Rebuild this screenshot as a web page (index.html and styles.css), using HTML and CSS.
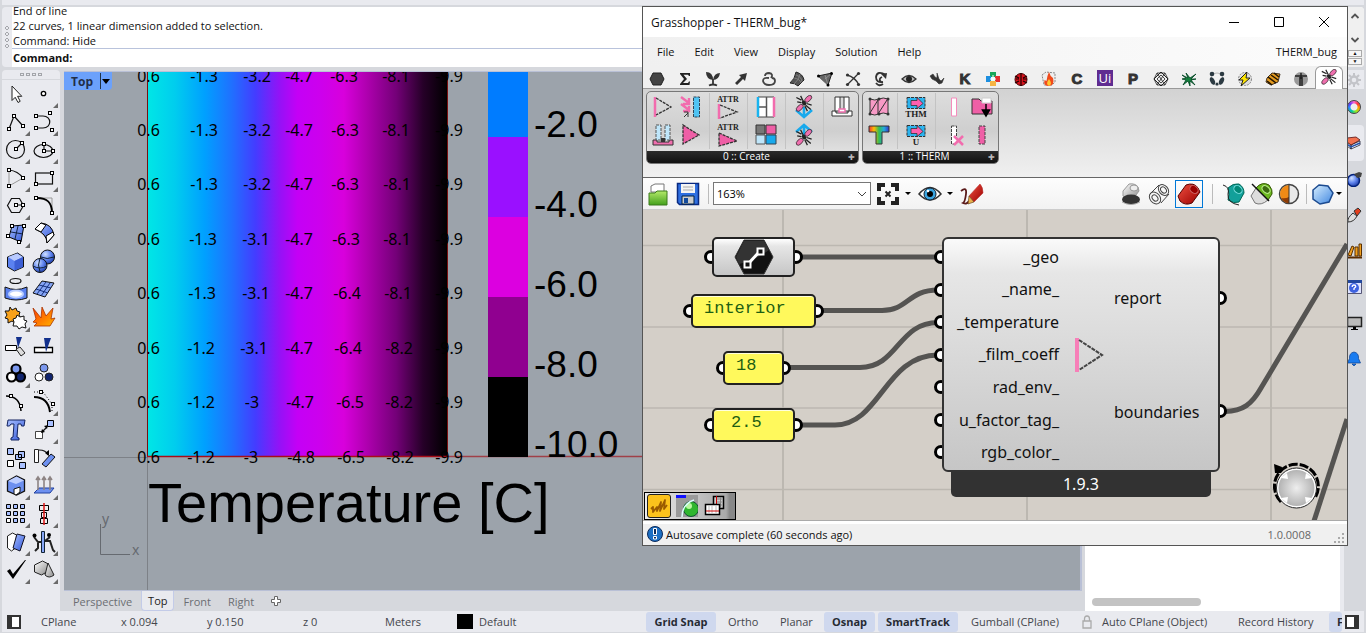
FILE: index.html
```html
<!DOCTYPE html>
<html lang="en">
<head>
<meta charset="utf-8">
<title>Grasshopper - THERM_bug</title>
<link rel="stylesheet" href="styles.css">
</head>
<body>
<svg class="defs" aria-hidden="true">
  <defs>
    <linearGradient id="gBlue" x1="0" y1="0" x2="1" y2="1"><stop offset="0" stop-color="#a9c0ff"/><stop offset="1" stop-color="#2f55d8"/></linearGradient>
    <radialGradient id="gBall" cx=".35" cy=".3" r=".8"><stop offset="0" stop-color="#cfe0ff"/><stop offset=".5" stop-color="#5f84ee"/><stop offset="1" stop-color="#132f96"/></radialGradient>
    <linearGradient id="gGray" x1="0" y1="0" x2="1" y2="1"><stop offset="0" stop-color="#fff"/><stop offset="1" stop-color="#888"/></linearGradient>
    <linearGradient id="gHot" x1="0" y1="0" x2="1" y2="1"><stop offset="0" stop-color="#ff3a00"/><stop offset="1" stop-color="#ffb400"/></linearGradient>
    <linearGradient id="gRed" x1="0" y1="0" x2="1" y2="1"><stop offset="0" stop-color="#f05040"/><stop offset="1" stop-color="#900"/></linearGradient>
    <linearGradient id="gGreen" x1="0" y1="0" x2="0" y2="1"><stop offset="0" stop-color="#b4ea6a"/><stop offset="1" stop-color="#43a01c"/></linearGradient>
    <linearGradient id="gRain"><stop offset="0" stop-color="#e33"/><stop offset=".25" stop-color="#fb0"/><stop offset=".5" stop-color="#3b5"/><stop offset=".75" stop-color="#2ad"/><stop offset="1" stop-color="#33c"/></linearGradient>
    <linearGradient id="gHex" x1="0" y1="0" x2="1" y2="1"><stop offset="0" stop-color="#d8efff"/><stop offset="1" stop-color="#3f86e0"/></linearGradient>
    <radialGradient id="gDial"><stop offset="0" stop-color="#eee"/><stop offset="1" stop-color="#b0b0b0"/></radialGradient>
    <symbol id="pt" viewBox="0 0 4 4"><rect x=".5" y=".5" width="3" height="3" fill="#fff" stroke="#000"/></symbol>
    <symbol id="fly" viewBox="0 0 20 20"><path d="M1 3l6 3M2 8l5 1M6 1l3 6M12 12l6 5M11 13l3 6M13 10l6 2" fill="none" stroke="#222" stroke-width="1.500"/><g fill="#ef6fae" stroke="#222" stroke-width=".8"><ellipse cx="15" cy="4.500" rx="2.800" ry="5" transform="rotate(45 15 4.500)"/><ellipse cx="5" cy="15" rx="2.800" ry="5" transform="rotate(45 5 15)"/></g><ellipse cx="10" cy="9.500" rx="2.200" ry="3.200" fill="#222" transform="rotate(-40 10 9.500)"/></symbol>
  </defs>
</svg>

<div class="app">
  <div class="top-strip"></div>
  <section class="command" aria-label="Command history">
    <div class="grip grip-v"></div>
    <div class="command-body">
      <div class="history"><p>End of line</p><p>22 curves, 1 linear dimension added to selection.</p><p>Command: Hide</p></div>
      <label class="prompt">Command:<input type="text" class="prompt-input"></label>
    </div>
    <div class="command-scroll">
      <div class="scroll-arrows"><svg viewBox="0 0 10 6"><path d="M1.500 5L5 1.500 8.500 5"/></svg><svg viewBox="0 0 10 6"><path d="M1.500 1L5 4.500 8.500 1"/></svg></div>
      <div class="spin"><button type="button" aria-label="Up">▲</button><button type="button" aria-label="Down">▼</button></div>
    </div>
  </section>

  <div class="work">
    <aside class="tools" aria-label="Tools">
      <div class="grip grip-h"></div>
      <div class="tool-grid">
        <button class="tool" aria-label="Select"><svg viewBox="0 0 28 28"><path d="M10 6v14.500l3.200-3.200 2.800 5.200 2.200-1.200-2.600-5h4.200z" fill="#fff" stroke="#222"/></svg></button>
        <button class="tool more" aria-label="Point"><svg viewBox="0 0 28 28"><circle cx="13.500" cy="13.500" r="2.200" fill="#fff" stroke="#000" stroke-width="1.300"/></svg></button>

        <button class="tool more" aria-label="Polyline"><svg viewBox="0 0 28 28"><path d="M7 21L12 8l9 10" class="ln"/><use href="#pt" x="5" y="19" width="4" height="4"/><use href="#pt" x="10" y="6" width="4" height="4"/><use href="#pt" x="19" y="16" width="4" height="4"/></svg></button>
        <button class="tool more" aria-label="Curve"><svg viewBox="0 0 28 28"><path d="M6 8h7c9 0 9 12 0 12H6" class="ln"/><use href="#pt" x="4" y="6" width="4" height="4"/><use href="#pt" x="4" y="18" width="4" height="4"/><use href="#pt" x="18" y="3" width="4" height="4"/><use href="#pt" x="20" y="20" width="4" height="4"/></svg></button>

        <button class="tool more" aria-label="Circle"><svg viewBox="0 0 28 28"><circle cx="13.500" cy="13.500" r="9" class="ln"/><path d="M14 13l6-6" class="ln"/><use href="#pt" x="12" y="11" width="4" height="4"/><use href="#pt" x="18" y="5" width="4" height="4"/></svg></button>
        <button class="tool more" aria-label="Ellipse"><svg viewBox="0 0 28 28"><ellipse cx="13.500" cy="15" rx="9.500" ry="6.500" class="ln"/><path d="M14 8v7h9" class="ln"/><use href="#pt" x="12" y="13" width="4" height="4"/><use href="#pt" x="12" y="6" width="4" height="4"/><use href="#pt" x="21" y="13" width="4" height="4"/></svg></button>

        <button class="tool more" aria-label="Arc"><svg viewBox="0 0 28 28"><path d="M7 6v16l14-8" fill="none" stroke="#999"/><path d="M7 6q9 1 14 8" class="ln"/><use href="#pt" x="5" y="4" width="4" height="4"/><use href="#pt" x="19" y="12" width="4" height="4"/><use href="#pt" x="5" y="20" width="4" height="4"/></svg></button>
        <button class="tool more" aria-label="Rectangle"><svg viewBox="0 0 28 28"><rect x="5.500" y="9" width="17" height="11" class="ln"/><use href="#pt" x="20" y="7" width="4" height="4"/><use href="#pt" x="4" y="18" width="4" height="4"/></svg></button>

        <button class="tool more" aria-label="Polygon"><svg viewBox="0 0 28 28"><path d="M5.500 13.500l4-7h8l4 7-4 7h-8zM14 13h8" class="ln"/><use href="#pt" x="12" y="11" width="4" height="4"/><use href="#pt" x="19" y="11" width="4" height="4"/></svg></button>
        <button class="tool more" aria-label="Fillet"><svg viewBox="0 0 28 28"><path d="M8 6h14v14" fill="none" stroke="#999"/><path d="M7 6c10 0 15 4 15 15" fill="none" stroke="#000" stroke-width="2"/><use href="#pt" x="4" y="4" width="4" height="4"/><use href="#pt" x="20" y="19" width="4" height="4"/></svg></button>

        <button class="tool more" aria-label="Surface from points"><svg viewBox="0 0 28 28"><path d="M10 6l12-1-3 17-12-5z" fill="url(#gBlue)" stroke="#000"/><path d="M16 6l-3 13M9 12l12 2" stroke="#124" fill="none"/><use href="#pt" x="8" y="4" width="4" height="4"/><use href="#pt" x="20" y="4" width="4" height="4"/><use href="#pt" x="4" y="14" width="4" height="4"/><use href="#pt" x="15" y="20" width="4" height="4"/></svg></button>
        <button class="tool more" aria-label="Loft"><svg viewBox="0 0 28 28"><path d="M11 3q11 1 13 12l-7 8q0-9-12-14z" fill="url(#gBlue)" stroke="#000"/><path d="M5 9l6-6 5 2-5 7zM16 16l7-4 1 3-7 8z" fill="#fff" stroke="#000"/></svg></button>

        <button class="tool more" aria-label="Box"><svg viewBox="0 0 28 28"><path d="M5.500 9l10-4 6 4v10l-9 4-7-4z" fill="#5b81f0" stroke="#111"/><path d="M6 9l9-3.500 6 3.500-8.500 4z" fill="#b8caff"/><path d="M12.500 13l8.500-4v10l-8.500 3.500z" fill="#3c5ed4"/></svg></button>
        <button class="tool more" aria-label="Boolean union"><svg viewBox="0 0 28 28"><circle cx="17.500" cy="9" r="7" fill="url(#gBall)" stroke="#111"/><circle cx="10" cy="17.500" r="7" fill="url(#gBall)" stroke="#111"/><path d="M3 18q7 4 14 0M10 10q-3 7 0 14M11 9q6 3 13 0" fill="none" stroke="#123"/></svg></button>

        <button class="tool more" aria-label="Extract"><svg viewBox="0 0 28 28"><ellipse cx="13.500" cy="5" rx="5.500" ry="2.500" class="ln"/><path d="M3 11q11 5 22 0v11q-11 4-22 0z" fill="#5b81f0" stroke="#111"/><ellipse cx="14" cy="18" rx="7" ry="3.500" fill="#fff" stroke="#bcd0ff" stroke-width="2"/></svg></button>
        <button class="tool more" aria-label="Mesh"><svg viewBox="0 0 28 28"><path d="M12 5l12 2-9 14-12-4z" fill="#86a5f5" stroke="#111"/><path d="M9 9l12 3M6 13l12 4M16 6L7 18M20 7l-9 13" stroke="#16307c" fill="none"/></svg></button>

        <button class="tool more" aria-label="Join"><svg viewBox="0 0 28 28"><path d="M8 3l2 3 4-2 1 3 3 1-1 3 2 3-4 2-2 3-3-2-4 2 0-4-3-1 2-3-2-4 4 0z" fill="#f9a21b" stroke="#111"/><path d="M15 11l3 2 4-1 0 4 3 1-2 3 1 4-4-1-3 2-2-3-4 0 1-4-1-3 3-1z" fill="#fff" stroke="#111"/></svg></button>
        <button class="tool" aria-label="Explode"><svg viewBox="0 0 28 28"><path d="M3 4l8 10 1-11 4 9 7-8-2 11 4-1-5 8H4l3-3-4-1 3-3z" fill="url(#gHot)" stroke="#a30" stroke-width=".8"/></svg></button>

        <button class="tool" aria-label="Trim"><svg viewBox="0 0 28 28"><path d="M3.500 13.500h11v5h-11z" fill="#fff" stroke="#000"/><path d="M14 17l4-2 5 6-4 3z" fill="#ddd" stroke="#222"/><path d="M14 5h6l-4 11z" fill="#12308c"/></svg></button>
        <button class="tool" aria-label="Split"><svg viewBox="0 0 28 28"><path d="M4.500 15.500h18v5h-18z" fill="#fff" stroke="#000" stroke-width="1.300"/><path d="M14 6h7l-5 14z" fill="#12308c"/></svg></button>

        <button class="tool more" aria-label="Group"><svg viewBox="0 0 28 28"><g stroke="#000" stroke-width="2.200"><circle cx="14" cy="9" r="4.500" fill="#7b98ee"/><circle cx="9.500" cy="17" r="4.500" fill="#fff"/><circle cx="18.500" cy="17" r="4.500" fill="#10246e"/></g></svg></button>
        <button class="tool" aria-label="Ungroup"><svg viewBox="0 0 28 28"><g stroke="#222"><circle cx="14" cy="8" r="4" fill="#7b98ee"/><circle cx="9" cy="17" r="4" fill="#fff"/><circle cx="19" cy="17" r="4" fill="#10246e"/></g></svg></button>

        <button class="tool" aria-label="Edit points"><svg viewBox="0 0 28 28"><path d="M4 8q14 0 15 15" fill="none" stroke="#000" stroke-width="1.500"/><use href="#pt" x="7" y="6" width="4" height="4"/><use href="#pt" x="17" y="16" width="4" height="4"/></svg></button>
        <button class="tool more" aria-label="Control points"><svg viewBox="0 0 28 28"><path d="M4 9q14 0 16 15" fill="none" stroke="#000" stroke-width="2"/><path d="M4 4h9l9 12v8" fill="none" stroke="#000" stroke-dasharray="1 2"/><use href="#pt" x="9" y="2" width="4" height="4"/><use href="#pt" x="21" y="14" width="4" height="4"/></svg></button>

        <button class="tool" aria-label="Text"><svg viewBox="0 0 28 28"><path d="M6 4h17l-1 6h-2.500l-.5-2h-3l-1 13 2 1v2h-8v-2l2-1 1-13H9l-1.500 2H5z" fill="url(#gBlue)" stroke="#12225e"/></svg></button>
        <button class="tool more" aria-label="Move"><svg viewBox="0 0 28 28"><path d="M17.500 4.500h6v6h-6z" fill="#a9c0ff" stroke="#000"/><path d="M5.500 15.500h7v7h-7z" fill="#fff" stroke="#444"/><path d="M12 16l4-4" class="ln"/><path d="M12 13l3 3-4 1zM14 10l3 3 1-4z" fill="#000"/></svg></button>

        <button class="tool" aria-label="Copy"><svg viewBox="0 0 28 28"><g stroke="#000"><path d="M5.500 4.500h6v6h-6zM16.500 7.500h6v6h-6zM13.500 10.500h6v5h-6zM17.500 18.500h6v6h-6z" fill="#a9c0ff"/><path d="M5.500 16.500h6v6h-6z" fill="#fff"/></g></svg></button>
        <button class="tool" aria-label="Rotate"><svg viewBox="0 0 28 28"><path d="M4.500 5.500h4v13h-4z" fill="#fff" stroke="#222"/><path d="M12 20l9-10 4 3-9 10z" fill="#6d90f0" stroke="#111"/><path d="M9 6q7 0 9 5" class="ln"/><path d="M15 9l4 3 0-6z"/></svg></button>

        <button class="tool more" aria-label="Cap"><svg viewBox="0 0 28 28"><path d="M5.500 9l9-5 8 4v11l-8 4-9-4z" fill="#6d90f0" stroke="#111" stroke-width="1.300"/><path d="M6 9l8.500-4.500 7.500 4-8 3.500z" fill="#bccdff"/><path d="M12 17l6-2v5l-4 3-2-1z" fill="#fff" stroke="#111"/></svg></button>
        <button class="tool more" aria-label="Extrude"><svg viewBox="0 0 28 28"><path d="M4 21l5-5h15l-4 5z" fill="#6d90f0" stroke="#2040a0"/><g stroke="#8d8484" stroke-width="1.600" fill="none"><path d="M8 18V6M14 18V6M20 18V6M6 8l2-3 2 3M12 8l2-3 2 3M18 8l2-3 2 3"/></g></svg></button>

        <button class="tool more" aria-label="Array"><svg viewBox="0 0 28 28"><g stroke="#000" fill="#a9c0ff"><path d="M4.500 4.500h4v4h-4zM11.500 4.500h4v4h-4zM18.500 4.500h4v4h-4zM4.500 11.500h4v4h-4zM11.500 11.500h4v4h-4zM18.500 11.500h4v4h-4zM11.500 18.500h4v4h-4zM18.500 18.500h4v4h-4z"/><path d="M4.500 18.500h4v4h-4z" fill="#fff"/></g></svg></button>
        <button class="tool more" aria-label="Align"><svg viewBox="0 0 28 28"><path d="M9.500 5.500h9v5h-9zM11.500 12.500h5v5h-5zM10.500 18.500h7v5h-7z" fill="#eee" stroke="#000"/><path d="M14 3v22" stroke="#d11" stroke-width="1.500"/></svg></button>

        <button class="tool more" aria-label="Bend"><svg viewBox="0 0 28 28"><path d="M5.500 8l5-3 4 2-1 13-4 3-4-3z" fill="#fff" stroke="#222"/><path d="M15 6l8 2-5 15-7-3z" fill="url(#gBlue)" stroke="#112"/></svg></button>
        <button class="tool more" aria-label="Analyze"><svg viewBox="0 0 28 28"><path d="M4 9l4 5h4M8 13v7l-3 3M20 9l-5 4h5l3 9 2 2" fill="none" stroke="#222" stroke-width="2"/><path d="M11.500 3.500h3v21h-3z" fill="#86a5f5" stroke="#123"/><circle cx="4.500" cy="7.500" r="2"/><circle cx="19" cy="7" r="2"/></svg></button>

        <button class="tool more" aria-label="Check"><svg viewBox="0 0 28 28"><path d="M5 15l3-2 3 5L23 4l1 0-13 19z"/></svg></button>
        <button class="tool more" aria-label="Solids"><svg viewBox="0 0 28 28"><path d="M4.500 9l8-4 6 3v7l-7 4-7-3z" fill="url(#gGray)" stroke="#222"/><path d="M18 7l6 12q-5 4-9 0z" fill="url(#gGray)" stroke="#222"/></svg></button>
      </div>
    </aside>

    <main class="view-area">
      <div class="viewport">
        <svg class="scene" width="580" height="519" viewBox="64 72 580 519">
          <defs>
            <linearGradient id="heat">
              <stop offset="0" stop-color="#00e6e6"/><stop offset=".09" stop-color="#00cdee"/><stop offset=".19" stop-color="#00a0ff"/><stop offset=".28" stop-color="#2070ff"/><stop offset=".36" stop-color="#443cff"/><stop offset=".44" stop-color="#9412f6"/><stop offset=".5" stop-color="#c400f6"/><stop offset=".57" stop-color="#cc00ee"/><stop offset=".655" stop-color="#d800dc"/><stop offset=".73" stop-color="#b000b0"/><stop offset=".83" stop-color="#740078"/><stop offset=".92" stop-color="#260028"/><stop offset="1" stop-color="#000"/>
            </linearGradient>
          </defs>
          <path d="M147.500 457V591M64 457.500h83" stroke="#7d8187"/>
          <rect x="148" y="72" width="299" height="385" fill="url(#heat)"/>
          <path d="M147.500 72V457M447.500 72V457" stroke="#7a1010"/>
          <path d="M147 456.500H448" stroke="#a80c18" stroke-width="1.500"/>
          <path d="M448 456.500H644" stroke="#a04048" stroke-width="1.500"/>
          <g class="heat-text">
            <text y="82"><tspan x="148.500">0.6</tspan><tspan x="204">-1.3</tspan><tspan x="257">-3.2</tspan><tspan x="299">-4.7</tspan><tspan x="344">-6.3</tspan><tspan x="396">-8.1</tspan><tspan x="449">-9.9</tspan></text>
            <text y="136"><tspan x="148.500">0.6</tspan><tspan x="204">-1.3</tspan><tspan x="257">-3.2</tspan><tspan x="299">-4.7</tspan><tspan x="345">-6.3</tspan><tspan x="396">-8.1</tspan><tspan x="449">-9.9</tspan></text>
            <text y="190"><tspan x="148.500">0.6</tspan><tspan x="204">-1.3</tspan><tspan x="257">-3.2</tspan><tspan x="299">-4.7</tspan><tspan x="345">-6.3</tspan><tspan x="397">-8.1</tspan><tspan x="449">-9.9</tspan></text>
            <text y="245"><tspan x="148.500">0.6</tspan><tspan x="203">-1.3</tspan><tspan x="256">-3.1</tspan><tspan x="299">-4.7</tspan><tspan x="346">-6.3</tspan><tspan x="397">-8.1</tspan><tspan x="449">-9.9</tspan></text>
            <text y="299"><tspan x="148.500">0.6</tspan><tspan x="202">-1.3</tspan><tspan x="256">-3.1</tspan><tspan x="299">-4.7</tspan><tspan x="347">-6.4</tspan><tspan x="398">-8.1</tspan><tspan x="449">-9.9</tspan></text>
            <text y="354"><tspan x="148.500">0.6</tspan><tspan x="201">-1.2</tspan><tspan x="254">-3.1</tspan><tspan x="299">-4.7</tspan><tspan x="348">-6.4</tspan><tspan x="399">-8.2</tspan><tspan x="449">-9.9</tspan></text>
            <text y="408"><tspan x="148.500">0.6</tspan><tspan x="201">-1.2</tspan><tspan x="252">-3</tspan><tspan x="300">-4.7</tspan><tspan x="350">-6.5</tspan><tspan x="399">-8.2</tspan><tspan x="449">-9.9</tspan></text>
            <text y="463"><tspan x="148.500">0.6</tspan><tspan x="201">-1.2</tspan><tspan x="251">-3</tspan><tspan x="301">-4.8</tspan><tspan x="351">-6.5</tspan><tspan x="400">-8.2</tspan><tspan x="449">-9.9</tspan></text>
          </g>
          <rect x="488" y="72" width="40" height="65" fill="#007cff"/>
          <rect x="488" y="137" width="40" height="80" fill="#9a10ff"/>
          <rect x="488" y="217" width="40" height="80" fill="#dc00e0"/>
          <rect x="488" y="297" width="40" height="80" fill="#900090"/>
          <rect x="488" y="377" width="40" height="80" fill="#000"/>
          <g class="legend-text"><text x="534" y="137">-2.0</text><text x="534" y="217">-4.0</text><text x="534" y="297">-6.0</text><text x="534" y="377">-8.0</text><text x="534" y="457">-10.0</text></g>
          <text class="caption" x="148" y="522">Temperature [C]</text>
          <path d="M100.500 524V554.500H130" fill="none" stroke="#666a70"/>
          <text class="axis" x="102" y="524">y</text><text class="axis" x="132" y="555">x</text>
        </svg>
        <div class="view-title"><span>Top</span><button type="button" aria-label="Viewport menu"><svg viewBox="0 0 8 5"><path d="M0 0h8L4 5z"/></svg></button></div>
      </div>
      <nav class="view-tabs">
        <button type="button">Perspective</button><button type="button" class="on">Top</button><button type="button">Front</button><button type="button">Right</button>
        <button type="button" class="plus" aria-label="New view"><svg viewBox="0 0 10 10"><path d="M3.500 .5h3v3h3v3h-3v3h-3v-3h-3v-3h3z"/></svg></button>
      </nav>
    </main>

    <aside class="side-panel"><div class="hbar"></div></aside>
    <aside class="rail">
      <div class="rail-head"><svg viewBox="0 0 14 14"><circle cx="7" cy="7" r="3.500" fill="none" stroke="#c3c4c9" stroke-width="2.400"/><path d="M7 0v3M7 11v3M0 7h3M11 7h3M2 2l2 2M10 10l2 2M2 12l2-2M10 4l2-2" stroke="#c3c4c9" stroke-width="2"/></svg></div>
      <button aria-label="Display"><span class="wheel"></span></button>
      <button aria-label="Layers" class="on"><svg viewBox="0 0 16 16"><path d="M0 7l4 3v4l-4-3zM4 14l9-4V6l-9 4z" fill="#fff" stroke="#223" stroke-width=".8"/><path d="M0 3l9-1 4 3-9 5-4-3z" fill="#f2714f" stroke="#511" stroke-width=".8"/><path d="M0 9l4 3 9-4" stroke="#2450a8" stroke-width="1.500" fill="none"/></svg></button>
      <button aria-label="Bomb"><svg viewBox="0 0 16 16"><circle cx="6.500" cy="9.500" r="6" fill="url(#gBall)" stroke="#01207a" stroke-width="1.500"/><path d="M7 3l5-2 3 1-1 4-4 1z" fill="#444"/></svg></button>
      <button aria-label="Paint"><svg viewBox="0 0 16 16"><path d="M1 15q-1-4 5-9l4 3q-3 6-9 6z" fill="#ddd" stroke="#333"/><path d="M7 4l4-3 3 3-4 5z" fill="#e33e1c" stroke="#333"/></svg></button>
      <button aria-label="Libraries"><svg viewBox="0 0 16 16"><path d="M1 12l4-9 2 1-3 9zM8 4h3v9H8zM12 1h2.500v12H12z" fill="#f0a021" stroke="#5a3000"/><path d="M0 14.500h15" stroke="#5a2c00" stroke-width="2"/></svg></button>
      <button aria-label="Help"><svg viewBox="0 0 16 16"><path d="M.5 1.500h14v13H.5z" fill="#dfe4ff" stroke="#557"/><path d="M0 1h15v3H0z" fill="#23489f"/><circle cx="7" cy="9" r="5" fill="#3e62e0"/><path d="M5.200 8q0-2 1.800-2t1.800 1.700L7 9.500V11" fill="none" stroke="#fff" stroke-width="1.300"/></svg></button>
      <button aria-label="Monitor"><svg viewBox="0 0 16 16"><path d="M.5 2.500h14v9H.5z" fill="#bbb" stroke="#222" stroke-width="1.500"/><path d="M6 12h3v2H6zM4 14h7v1H4z"/></svg></button>
      <button aria-label="Notifications"><svg viewBox="0 0 16 16"><path d="M7 1q5 1 4.500 6.500L13.500 12H.5l2-4.500Q2 2 7 1zM5 13h4l-2 2z" fill="#1a7cf0" stroke="#0a3f90" stroke-width=".7"/></svg></button>
    </aside>
  </div>

  <footer class="status">
    <svg class="pane" viewBox="0 0 14 14"><path d="M1 1h12v12H1z" fill="#fff" stroke="#333" stroke-width="2"/><path d="M0 0h5v14H0z" fill="#333"/></svg>
    <span class="s-cplane">CPlane</span><span class="s-num">x 0.094</span><span class="s-y">y 0.150</span><span class="s-z">z 0</span><span class="s-unit">Meters</span>
    <span class="s-layer"><i class="swatch"></i>Default</span>
    <button type="button" class="on w-grid">Grid Snap</button><button type="button" class="w-ortho">Ortho</button><button type="button" class="w-planar">Planar</button><button type="button" class="on w-osnap">Osnap</button><button type="button" class="on w-smart">SmartTrack</button><button type="button" class="w-gumball">Gumball (CPlane)</button>
    <span class="w-auto"><svg class="lock" viewBox="0 0 10 14"><path d="M1 6h8v7H1zM2.500 6V4q0-3 2.500-3t2.500 3v2" fill="none" stroke="#aaa" stroke-width="1.300"/></svg>Auto CPlane (Object)</span>
    <button type="button" class="w-record">Record History</button><button type="button" class="on w-filter">Filter</button>
    <svg class="pane" viewBox="0 0 14 14"><path d="M1 1h12v12H1z" fill="#fff" stroke="#333" stroke-width="2"/><path d="M9 0h5v14H9z" fill="#333"/></svg>
  </footer>
</div>

<section class="gh" aria-label="Grasshopper">
  <header class="gh-title"><h1>Grasshopper - THERM_bug*</h1>
    <div class="win-btns"><button aria-label="Minimize"><svg viewBox="0 0 12 12"><path d="M1 6.500h10"/></svg></button><button aria-label="Maximize"><svg viewBox="0 0 12 12"><path d="M1.500 1.500h9v9h-9z"/></svg></button><button aria-label="Close"><svg viewBox="0 0 12 12"><path d="M1 1l10 10M11 1L1 11"/></svg></button></div>
  </header>
  <nav class="gh-menu"><button>File</button><button>Edit</button><button>View</button><button>Display</button><button>Solution</button><button>Help</button><span class="doc">THERM_bug</span></nav>

  <nav class="gh-tabs">
    <button aria-label="Params"><svg viewBox="0 0 16 16"><path d="M4 2h8l3 6-3 6H4L1 8z" fill="#444" stroke="#222"/></svg></button>
    <button aria-label="Maths"><svg viewBox="0 0 16 16"><path d="M3 2h10v3h-1l-1-1.200H6.500L10 8l-4 4h5l1-1.500h1L12.500 14H3v-1l4-5-4-5z" fill="#222"/></svg></button>
    <button aria-label="Sets"><svg viewBox="0 0 16 16"><path d="M1 1q7 0 7 8Q1 8 1 1zM15 2q-6 0-7 7 6 0 7-7z" fill="#333"/><path d="M8 8v6M4 14.500q4-2 8 0" stroke="#333" stroke-width="1.800" fill="none"/></svg></button>
    <button aria-label="Vector"><svg viewBox="0 0 16 16"><path d="M2 12l6-6-2-2 8-2-2 8-2-2-6 6z" fill="#333"/></svg></button>
    <button aria-label="Curve"><svg viewBox="0 0 16 16"><path d="M4 5q0-3 4-3 5 1 2 5M8 7Q2 6 2 10q1 4 6 4 6 0 6-4 0-3-3-3" fill="none" stroke="#444" stroke-width="1.800"/></svg></button>
    <button aria-label="Surface"><svg viewBox="0 0 16 16"><path d="M7 1q7 2 8 8l-6 6q-3-3-8-3 5-4 6-11z" fill="#555" stroke="#222"/><path d="M5 7q6 1 7 5M7 4q6 2 6 7M11 3q-1 6-6 10" stroke="#999" fill="none" stroke-width=".6"/></svg></button>
    <button aria-label="Mesh"><svg viewBox="0 0 16 16"><path d="M1 5l14-3-4 12z" fill="#666" stroke="#222"/><path d="M1 5l10 9M8 4l3 10M15 2L8 8" stroke="#aaa" fill="none" stroke-width=".6"/><circle cx="1.500" cy="5" r="1.500"/><circle cx="14.500" cy="2.500" r="1.500"/><circle cx="11" cy="14" r="1.500"/></svg></button>
    <button aria-label="Intersect"><svg viewBox="0 0 16 16"><path d="M2 14L14 2M2 4q8 2 12 10" stroke="#333" fill="none" stroke-width="1.300"/><g fill="#333"><circle cx="2.500" cy="13.500" r="1.600"/><circle cx="13.500" cy="2.500" r="1.600"/><circle cx="2.500" cy="4" r="1.600"/><circle cx="13.500" cy="13.500" r="1.600"/></g></svg></button>
    <button aria-label="Transform"><svg viewBox="0 0 16 16"><path d="M13 4Q4-1 3 6q0 6 7 5M9 6q-4 2-1 5M3 12q3 4 7 1" fill="none" stroke="#333" stroke-width="1.800"/><path d="M8 3l6-1-1 6z" fill="#333"/></svg></button>
    <button aria-label="Display"><svg viewBox="0 0 16 16"><path d="M1 8q7-7 14 0-7 7-14 0z" fill="#bbb" stroke="#333" stroke-width="1.300"/><circle cx="8" cy="8" r="3" fill="#222"/></svg></button>
    <button aria-label="Kangaroo"><svg viewBox="0 0 16 16"><path d="M1 5l3-2 2 3 2 1V2l2 6 2 2 3-3-2 5-3 1-3-3-4-2z" fill="#333" stroke="#333" stroke-width=".6"/></svg></button>
    <button class="letter">K</button>
    <button aria-label="Palette"><svg viewBox="0 0 16 16"><path d="M5 1h6v5H5z" fill="#19a65a"/><path d="M1 5h5v6H1z" fill="#1d8fe0"/><path d="M10 5h5v6h-5z" fill="#e23030"/><path d="M5 10h6v5H5z" fill="#f6b443"/><path d="M6 6h4v4H6z" fill="#dff"/><path d="M8 4v5M5 8h6" stroke="#fff"/></svg></button>
    <button aria-label="Ladybug"><svg viewBox="0 0 16 16"><circle cx="8" cy="8.500" r="6" fill="#d8121c" stroke="#400"/><path d="M8 2v13M2 5l4 2M14 5l-4 2M2 12l4-2M14 12l-4-2M3 8h3M10 8h4" stroke="#200" stroke-width="1.200"/></svg></button>
    <button aria-label="Fire"><svg viewBox="0 0 16 16"><path d="M1 4l4-3 9 1v9l-3 3H3z" fill="#eee" stroke="#888" stroke-dasharray="2 1"/><path d="M8 1q1 4 4 6 2 7-4 8-6 0-4.500-6l2 1Q6 5 8 1z" fill="#f04a1c"/><path d="M8 8q4 5 0 7-4-2 0-7z" fill="#ffc72e"/></svg></button>
    <button class="letter">C</button>
    <button class="ui-tab">Ui</button>
    <button class="letter">P</button>
    <button aria-label="Lattice"><svg viewBox="0 0 16 16"><path d="M8 1l7 7-7 7-7-7z" fill="#eee" stroke="#222"/><path d="M4 2h8l3 6-3 6H4L1 8zM4 2l8 12M12 2L4 14M4 8l4-4 4 4-4 4z" stroke="#222" fill="none" stroke-width=".8"/></svg></button>
    <button aria-label="Dragonfly"><svg viewBox="0 0 16 16"><path d="M1 4l6 3-2-5 4 5 6-4-5 5h5l-5 1 4 5-5-4v5l-2-5-5 4 3-5-4-1 4-1z" fill="#14803c" stroke="#042" stroke-width=".8"/></svg></button>
    <button aria-label="Panda"><svg viewBox="0 0 16 16"><circle cx="8" cy="8" r="6" fill="#f3f3f3" stroke="#bbb"/><g fill="#2c3a42"><circle cx="3" cy="3" r="2.300"/><circle cx="13" cy="3" r="2.300"/><ellipse cx="3.500" cy="10" rx="2.200" ry="4" transform="rotate(-25 3.500 10)"/><ellipse cx="12.500" cy="10" rx="2.200" ry="4" transform="rotate(25 12.500 10)"/><circle cx="8" cy="13" r="1.500"/></g></svg></button>
    <button aria-label="Lightning"><svg viewBox="0 0 16 16"><circle cx="8" cy="8" r="6.500" fill="#ddd" stroke="#888" stroke-dasharray="2 1"/><path d="M10 1L2 9h4l-2 6 9-8H9z" fill="#ffe600" stroke="#222"/></svg></button>
    <button aria-label="Honeybee"><svg viewBox="0 0 16 16"><path d="M2 7l5-5 8 1-2 8-7 3-5-3z" fill="#e59b20" stroke="#432"/><path d="M3 6l8 6M6 4l7 5M9 2l5 4M2 10l5 4" stroke="#221500" stroke-width="1.500"/></svg></button>
    <button aria-label="Human"><svg viewBox="0 0 16 16"><circle cx="8" cy="8" r="7" fill="#999"/><path d="M2 5h12M8 2v6M7 6v9M9 6v9" stroke="#222" stroke-width="1.500"/></svg></button>
    <button class="on" aria-label="Therm"><svg viewBox="0 0 20 20"><use href="#fly" width="20" height="20"/></svg></button>
  </nav>

  <div class="ribbon">
    <section class="panel">
      <div class="groups">
        <div class="group two first">
          <button><svg viewBox="0 0 24 24"><path d="M4 2v20" class="pk"/><path d="M5 3l15 9-15 8" class="ds"/></svg></button>
          <button><svg viewBox="0 0 24 24"><path d="M14.500 2h6v20h-6z" fill="#4fc4f4" stroke="#345" stroke-dasharray="3 1"/><path d="M2 2l8 6M2 9l8 6M10 3v6H4M10 11v5H4" class="pk2"/><path d="M5 22l4-4M9 22v-5H5" stroke="#333" fill="none"/></svg></button>
          <button><svg viewBox="0 0 24 24"><path d="M2 22v-5h4v2h12v-2h4v5z" fill="#ef6fae" stroke="#333"/><path d="M5 2h5v15H5zM14 2h5v15h-5z" fill="#bfe6fa" stroke="#555" stroke-dasharray="3 1"/><path d="M10 15h4v4h-4z" fill="#333"/></svg></button>
          <button><svg viewBox="0 0 24 24"><path d="M4 2l16 10L4 21z" fill="#ef5fa6"/><path d="M4 2l16 10L4 21z" class="ds"/></svg></button>
        </div>
        <div class="group">
          <button class="attr"><span>ATTR</span><svg viewBox="0 0 24 15"><path d="M3 0v15" class="pk"/><path d="M4 1l17 7-17 6" class="ds"/></svg></button>
          <button class="attr"><span>ATTR</span><svg viewBox="0 0 24 15"><path d="M3 1l18 8-18 5z" fill="#ef5fa6"/><path d="M3 1l18 8-18 5z" class="ds"/></svg></button>
        </div>
        <div class="group">
          <button><svg viewBox="0 0 24 24"><path d="M4 2h16v20H4z" fill="#fff" stroke="#444"/><path d="M12.500 2v20M5 12h8" stroke="#555" stroke-width="1.500" fill="none"/><path d="M4 2v20" stroke="#18b4f0" stroke-width="2.500"/><path d="M20 2v20" class="pk"/></svg></button>
          <button><svg viewBox="0 0 24 24"><path d="M2 2h9v9H2z" fill="#777" stroke="#333"/><path d="M12 2h10v9H12z" fill="#ef5fa6" stroke="#333"/><path d="M2 12h9v9H2z" fill="#bfe6fa" stroke="#555"/><path d="M12 12h10v9H12z" fill="#18a9ec" stroke="#345"/></svg></button>
        </div>
        <div class="group">
          <button><svg viewBox="0 0 24 24"><path d="M12 12v10M4 15l8 7 8-7" class="bl"/><use href="#fly" x="2" y="0" width="20" height="17"/></svg></button>
          <button><svg viewBox="0 0 24 24"><path d="M12 2v11M4 9l8-7 8 7" class="bl"/><use href="#fly" x="2" y="6" width="20" height="17"/></svg></button>
        </div>
        <div class="group last">
          <button><svg viewBox="0 0 24 24"><path d="M2 21v-5h4v2h12v-2h4v5z" fill="#fff" stroke="#333"/><path d="M5 2h5v14H5zM14 2h5v14h-5zM10 2h4" fill="#fff" stroke="#333"/><path d="M9 17v-3h6v3z" fill="#fff" stroke="#ef6fae" stroke-width="1.500"/></svg></button>
        </div>
      </div>
      <footer>0 :: Create<i>✚</i></footer>
    </section>
    <section class="panel">
      <div class="groups">
        <div class="group first">
          <button><svg viewBox="0 0 24 24"><path d="M3 4q5 2 9 0t9 0v15q-5-2-9 0t-9 0z" fill="#f79ac6" stroke="#333"/><path d="M3 18l8-13v14l9-14" stroke="#333" fill="none"/><g fill="#333"><circle cx="3" cy="4" r="1.500"/><circle cx="12" cy="4" r="1.500"/><circle cx="21" cy="4" r="1.500"/><circle cx="3" cy="19" r="1.500"/><circle cx="12" cy="19" r="1.500"/><circle cx="21" cy="19" r="1.500"/></g></svg></button>
          <button><svg viewBox="0 0 24 24"><path d="M2 3h20v6h-7v12H9V9H2z" fill="url(#gRain)" stroke="#333"/></svg></button>
        </div>
        <div class="group">
          <button class="thm"><svg viewBox="0 0 24 13"><path d="M3 1h18v11H3z" fill="#2cb3ee" stroke="#333" stroke-dasharray="3 1"/><path d="M7 4h6V1l6 6-6 5V9H7z" class="ar"/></svg><span>THM</span></button>
          <button class="thm"><svg viewBox="0 0 24 13"><path d="M3 1h18v11H3z" fill="#2cb3ee" stroke="#333" stroke-dasharray="3 1"/><path d="M7 4h6V1l6 6-6 5V9H7z" class="ar"/></svg><span>U</span></button>
        </div>
        <div class="group two last">
          <button><svg viewBox="0 0 24 24"><path d="M9.500 3h5v18h-5z" fill="#fff" stroke="#f48cbc"/></svg></button>
          <button><svg viewBox="0 0 24 24"><path d="M2 4h7l2 2h11v13H2z" fill="#ef5fa6" stroke="#333"/><path d="M12 3h9v5h-9z" fill="#fff" stroke="#ccc"/><path d="M16 9v9M12.500 15l3.500 6 3.500-6z" stroke="#000" stroke-width="1.500"/></svg></button>
          <button><svg viewBox="0 0 24 24"><path d="M9.500 3h5v18h-5z" fill="#fff" stroke="#444" stroke-dasharray="3 1"/><path d="M12 13l9 9M21 13l-9 9" class="pk"/></svg></button>
          <button><svg viewBox="0 0 24 24"><path d="M9 3h6v18H9z" fill="#ef5fa6" stroke="#444" stroke-dasharray="3 1"/></svg></button>
        </div>
      </div>
      <footer>1 :: THERM<i>✚</i></footer>
    </section>
  </div>

  <div class="gh-bar">
    <button aria-label="Open"><svg viewBox="0 0 24 24"><path d="M5 9V4l4-2h9v8H5z" fill="#fff" stroke="#777"/><path d="M3 11h6l2-2h10v14H3z" fill="url(#gGreen)" stroke="#3a7a1c"/></svg></button>
    <button aria-label="Save"><svg viewBox="0 0 24 24"><path d="M1.500 1.500h21v21h-19l-2-2z" fill="#2f6fe0" stroke="#0a2a80" stroke-width="1.500"/><path d="M5 2h14v9H5z" fill="#f4f4f4"/><path d="M7 5h10M7 8h10" stroke="#aaa"/><path d="M6 14h12v8H6z" fill="#ccc" stroke="#024"/><path d="M8 16h4v5H8z" fill="#124a9c"/></svg></button>
    <span class="sep lead"></span>
    <div class="combo"><select aria-label="Zoom"><option>163%</option></select><svg viewBox="0 0 10 6"><path d="M1 1l4 4 4-4"/></svg></div>
    <button aria-label="Zoom extents"><svg viewBox="0 0 24 24"><path d="M9 3H3v6M15 3h6v6M9 21H3v-6M15 21h6v-6" fill="none" stroke="#222" stroke-width="4"/><path d="M9.500 9.500l5 5M14.500 9.500l-5 5" stroke="#222" stroke-width="2"/></svg></button><b class="drop"></b>
    <button aria-label="Preview"><svg viewBox="0 0 24 24"><path d="M1 12q11-13 22 0-11 12-22 0z" fill="#fff" stroke="#333" stroke-width="1.500"/><circle cx="12" cy="12" r="6" fill="#3aa5e0" stroke="#123"/><circle cx="12" cy="12" r="3"/><circle cx="10" cy="9" r="1.300" fill="#fff"/></svg></button><b class="drop"></b>
    <button aria-label="Sketch"><svg viewBox="0 0 24 24"><path d="M1 9q6-5 5 3t-3 9q4 2 6-2" fill="none" stroke="#5a1a1a" stroke-width="1.800"/><path d="M9 14L20 2q3 3 3 9L14 20z" fill="url(#gRed)" stroke="#b33" stroke-width=".6"/><path d="M9 14l5 6-6 2z" fill="#e9b04c" stroke="#531" stroke-width=".6"/></svg></button>
    <span class="fill"></span>
    <div class="modes">
    <button aria-label="No preview"><svg viewBox="0 0 24 24"><path d="M4 9l6-7q6-1 9 3l1 4-6 8q-6 1-10-3z" fill="url(#gGray)" stroke="#999"/><ellipse cx="15" cy="6" rx="4" ry="3" fill="#eee" stroke="#999"/><ellipse cx="12" cy="17.500" rx="9" ry="5" fill="#333"/><path d="M3 20q9 5 18 0" fill="none" stroke="#aaa"/></svg></button>
    <button aria-label="Wireframe"><svg viewBox="0 0 24 24"><g fill="none" stroke="#444"><ellipse cx="8" cy="16" rx="5" ry="6.500" transform="rotate(-40 8 16)"/><ellipse cx="8" cy="16" rx="2.500" ry="3.500" transform="rotate(-40 8 16)"/><ellipse cx="16.500" cy="8" rx="4.500" ry="6" transform="rotate(-40 16.500 8)"/><ellipse cx="16.500" cy="8" rx="2.500" ry="3.500" transform="rotate(-40 16.500 8)"/><path d="M3 12l9-9M14 21l8-9"/></g></svg></button>
    <button aria-label="Shaded" class="picked"><svg viewBox="0 0 24 24"><path d="M1 14l8-11q8-3 12 3l2 4-8 11q-7 3-12-2z" fill="url(#gRed)" stroke="#500"/><ellipse cx="17" cy="7.500" rx="4.500" ry="3.500" fill="#900" stroke="#c66" transform="rotate(40 17 7.500)"/></svg></button>
    <span class="sep"></span>
    <button aria-label="Selected only"><svg viewBox="0 0 24 24"><path d="M7 6q5-5 11-4 5 3 5 9l-5 9q-5 2-11-2 2-5 0-12z" fill="#12a09a" stroke="#065"/><ellipse cx="17" cy="7.500" rx="4.500" ry="3.500" fill="#087" stroke="#7dd" transform="rotate(40 17 7.500)"/><path d="M2 3q7 2 5 9-1 9 11 11" fill="none" stroke="#222"/></svg></button>
    <button aria-label="Selected preview"><svg viewBox="0 0 24 24"><path d="M2 14l5-8 12 12q-7 6-13 3z" fill="#ddd" stroke="#777"/><path d="M7 6q6-7 13-3 4 5 3 9l-4 6z" fill="#6cb820" stroke="#350"/><ellipse cx="17" cy="7.500" rx="4.500" ry="3" fill="#3c6a10" stroke="#be8" transform="rotate(40 17 7.500)"/><path d="M3 2l17 17" stroke="#111" stroke-width="1.500"/></svg></button>
    <button aria-label="Mesh quality"><svg viewBox="0 0 24 24"><circle cx="12" cy="12" r="9.500" fill="#e9e9e9" stroke="#444" stroke-width="1.500"/><path d="M12 3a9 9 0 0 0 0 18z" fill="#f08a16"/><path d="M4 16q4 6 8 5v-6q-4 2-8 1z" fill="#8e3c06"/><path d="M12 3v18" stroke="#333"/></svg></button>
    <span class="sep tight"></span>
    <button aria-label="Settings" class="end"><svg viewBox="0 0 24 24"><path d="M8 3l9 1 5 7-4 9-9 2-7-5 0-9z" fill="url(#gHex)" stroke="#1c4b90" stroke-width="1.500"/></svg></button><b class="drop end"></b>
    </div>
  </div>

  <div class="canvas">
    <svg class="wires" width="704" height="311" viewBox="643 210 704 311">
      <path d="M783 210v311M1027 210v311M1271 210v311" stroke="#bcb8b1" stroke-width="2"/><path d="M643 245.500h704M643 327h704M643 408h704M643 489.500h704" stroke="#bcb8b1" stroke-width="1.500"/>
      <g fill="none" stroke="#555452" stroke-width="5">
        <path d="M800 257H938"/><path d="M822 310.500H882C908 310.500 908 290 938 290"/><path d="M790 367.500H860C898 367.500 898 322.500 938 322.500"/><path d="M800 425H835C880 425 885 355 938 355"/>
        <path d="M1225 411.500C1243 411 1252 404 1261 388L1347 244"/><path d="M1347 419L1314 521"/>
      </g>
      <g fill="#fff" stroke="#000" stroke-width="3">
        <circle cx="711" cy="257" r="5.500"/><circle cx="796" cy="257" r="5.500"/><circle cx="690" cy="311" r="5.500"/><circle cx="817" cy="311" r="5.500"/><circle cx="723" cy="368" r="5.500"/><circle cx="784" cy="368" r="5.500"/><circle cx="711" cy="425" r="5.500"/><circle cx="796" cy="425" r="5.500"/>
        <circle cx="941" cy="257" r="5.500"/><circle cx="941" cy="290" r="5.500"/><circle cx="941" cy="322" r="5.500"/><circle cx="941" cy="355" r="5.500"/><circle cx="941" cy="387" r="5.500"/><circle cx="941" cy="420" r="5.500"/><circle cx="941" cy="452" r="5.500"/><circle cx="1220" cy="298" r="5.500"/><circle cx="1220" cy="411" r="5.500"/>
      </g>
      <path d="M1281 502a22 22 0 1 1 34-4" fill="none" stroke="#000" stroke-width="3" stroke-dasharray="9 2"/>
      <path d="M1274 464l8 3-1 6h-6z" fill="#000"/><circle cx="1296.500" cy="488" r="19" fill="url(#gDial)" stroke="#fff" stroke-width="2"/><circle cx="1296.500" cy="488" r="20" fill="none" stroke="#222"/>
      <path d="M1281 478l6-5 1 6zM1312 478l-6-5-1 6zM1281 498l6 5 1-6zM1312 498l-6 5-1-6z" fill="#fff"/>
    </svg>
    <div class="node geo"><svg viewBox="0 0 40 36"><path d="M10 1h20l9 17-9 17H10L1 18z" fill="#111" stroke="#333"/><path d="M10 2h20l5 9Q20 22 5 25L2 18z" fill="#333"/><path d="M14 25l12-13" stroke="#fff" stroke-width="3"/><path d="M10.500 22.500h6v6h-6zM23.500 9.500h6v6h-6z" fill="#111" stroke="#fff" stroke-width="2"/></svg></div>
    <div class="node note n-name">interior</div>
    <div class="node note n-temp">18</div>
    <div class="node note n-film">2.5</div>
    <div class="comp">
      <div class="comp-body">
        <ul class="ins"><li>_geo</li><li>_name_</li><li>_temperature</li><li>_film_coeff</li><li>rad_env_</li><li>u_factor_tag_</li><li>rgb_color_</li></ul>
        <svg viewBox="0 0 32 40"><path d="M4 3v34" stroke="#f77fb8" stroke-width="4"/><path d="M6 5l23 15L6 35" fill="none" stroke="#444" stroke-width="2" stroke-dasharray="4 1"/></svg>
        <ul class="outs"><li>report</li><li>boundaries</li></ul>
      </div>
      <div class="comp-foot">1.9.3</div>
    </div>
    <div class="widgets">
      <button class="hot" aria-label="Profiler"><svg viewBox="0 0 22 22"><path d="M3 14l2-2v5l4-5v4l4-9-1 9 5-11-1 9 3-4" fill="none" stroke="#9a5a00" stroke-width="1.800" stroke-linejoin="round"/></svg></button>
      <button aria-label="Remote"><svg viewBox="0 0 22 22"><path d="M0 0h22v22H0z" fill="#9a9a9a"/><path d="M0 0h10v3H0z" fill="#11f"/><circle cx="15" cy="14" r="7.500" fill="#2fb62f" stroke="#153"/><circle cx="13" cy="11" r="3" fill="#b8f8a0"/><path d="M6 22q0-13 12-17" stroke="#dff" fill="none" stroke-width="1.500"/></svg></button>
      <button aria-label="Align"><svg viewBox="0 0 22 22"><path d="M9.500 1.500h10v12h-10z" fill="#ccc" stroke="#000" stroke-width="1.500"/><path d="M12 4h6M12 7h6M12 10h6M16.500 2v11" stroke="#888"/><path d="M12.500 1v8" stroke="#c00"/><path d="M1.500 9.500h14v10h-14z" fill="#fff" stroke="#000" stroke-width="1.500"/><path d="M5 10v9M8 10v9M12 10v9" stroke="#bbb"/><path d="M2 16h13" stroke="#c00"/></svg></button>
    </div>
  </div>
  <footer class="gh-status"><svg viewBox="0 0 16 16"><circle cx="8" cy="8" r="7.500" fill="#1c6fc4" stroke="#0c2a5a"/><path d="M6.500 2.500h3v6h-3zM6.500 10.500h3v2.500h-3z" fill="#0c2a5a" stroke="#fff"/></svg><span>Autosave complete (60 seconds ago)</span><span class="ver">1.0.0008</span><svg class="size" viewBox="0 0 12 12"><path d="M9 1h2v2H9zM5 5h2v2H5zM9 5h2v2H9zM1 9h2v2H1zM5 9h2v2H5zM9 9h2v2H9z" fill="#aaa"/></svg></footer>
</section>
</body>
</html>
```
FILE: styles.css
```css
*{box-sizing:border-box}
body{margin:0;background:#d6d8dd;font:11px/15px "Open Sans","Noto Sans",sans-serif;color:#111;overflow:hidden}
button{font:inherit;color:inherit;background:none;border:0;padding:0;margin:0}
svg{display:block}
p,h1,ul{margin:0;padding:0;font:inherit;list-style:none}
.defs{position:absolute;width:0;height:0}
.ln{fill:none;stroke:#111;stroke-width:1.2}

.app{display:flex;flex-direction:column;height:100vh;min-height:633px}
.top-strip{height:7px;background:#e9eaef;margin:0 2px;border-bottom:2px solid #d6d8dd}
.command{display:flex;height:60px;margin:0 2px;background:linear-gradient(90deg,#e9eaef 10px,#fff 10px);border-radius:4px;overflow:hidden}
.grip{background-image:radial-gradient(circle,#e9eaef 1px,#a3a5aa 1px 2px,transparent 2px)}
.grip-v{flex:none;width:10px;background-size:10px 6px;background-repeat:repeat-y;background-clip:content-box;padding:18px 0}
.command-body{flex:1;min-width:0;display:flex;flex-direction:column}
.history{height:42px;overflow:hidden;display:flex;flex-direction:column;justify-content:flex-end;padding-left:1px;border-bottom:1px solid #b9c3dc}
.history p{flex:none;height:15px}
.prompt{display:flex;align-items:center;height:16px;padding-left:1px;font-weight:700}
.prompt-input{flex:1;height:14px;border:0;outline:0;background:none;font:inherit;padding:0 4px}
.command-scroll{width:18px;background:#f0f0f0;display:flex;flex-direction:column;justify-content:space-between}
.scroll-arrows{height:42px;display:flex;flex-direction:column;justify-content:space-between;align-items:center;padding:6px 0}
.scroll-arrows svg{width:10px;height:6px;fill:none;stroke:#555;stroke-width:1.8}
.spin{display:grid;gap:1px;padding:0 2px 2px}
.spin button{height:7px;border:1px solid #aaa;background:#f6f6f6;font-size:5px;line-height:5px;text-align:center}

.work{flex:1;display:flex;min-height:0;padding-top:3px}
.tools{width:58px;margin:0 4px 0 2px;background:#e9eaef;border-radius:4px 4px 0 0}
.grip-h{height:9px;margin:0 17px;background-size:6px 9px;background-repeat:repeat-x}
.tool-grid{display:grid;grid-template-columns:28px 28px;border-top:1px solid #d6d8dd}
.tool{position:relative;width:28px;height:28px}
.tool svg{width:28px;height:28px}
.more::after{content:"";position:absolute;right:0;bottom:0;border:solid transparent;border-width:0 0 5px 5px;border-bottom-color:#6a6a6a}

.view-area{flex:1;min-width:0;display:flex;flex-direction:column}
.viewport{position:relative;flex:1;min-height:0;margin-top:1px;overflow:hidden;background:#9ca3ab;border:solid #b9c0d6;border-width:1px 2px 1px 0}
.heat-text{font:16px "Noto Sans",sans-serif;text-anchor:middle;fill:#000}
.legend-text{font:37px "Liberation Sans",sans-serif}
.caption{font:56px "Liberation Sans",sans-serif}
.axis{font:14px "Noto Sans",sans-serif;fill:#666a70}
.view-title{position:absolute;left:0;top:0;display:flex;align-items:center;height:18px;background:#6ba1fb;color:#222e48;font-size:12px;font-weight:700;border-radius:0 0 4px 0;padding:0 2px 0 7px;gap:7px}
.view-title button{border-left:1px solid #234;padding-left:1px;height:16px}
.view-title svg{width:8px;height:5px}
.view-tabs{display:flex;height:20px;align-items:stretch;color:#6b6d72;gap:9px;padding-left:5px}
.view-tabs button{padding:0 4px}
.view-tabs .on{background:#e9eaef;color:#222;border:1px solid #c3cbe8;border-top:0;border-radius:0 0 4px 4px;padding:0 6px;margin:0 -4px}
.plus{display:flex;align-items:center}
.plus svg{width:10px;height:10px;fill:#fff;stroke:#666}
.side-panel{width:259px;margin-left:3px;background:#fff;border-right:4px solid #e9eaef;display:flex;align-items:flex-end;padding:5px 7px}
.hbar{width:109px;height:8px;border-radius:4px;background:#c3c3c3}
.rail{width:22px;padding-right:2px;display:flex;flex-direction:column}
.rail button,.rail-head{height:36px;padding:0 0 0 3px;display:flex;align-items:center}
.rail .rail-head{height:19px;background:#e9eaef}
.rail-head svg{width:14px;height:14px}
.rail .on{background:#e9eaef;border-radius:0 4px 4px 0}
.rail button svg{width:16px;height:16px}
.wheel{width:14px;height:14px;border-radius:50%;border:1px solid #444;background:radial-gradient(circle,#eee 3px,transparent 4px),conic-gradient(#f6c,#f33,#fa0,#9e2,#0c9,#29f,#63f,#f6c)}

.status{display:flex;align-items:center;height:22px;margin:0 2px;padding:0 5px;background:#e9eaef;color:#44464c;white-space:nowrap;border-bottom:1px solid #d6d8dd}
.status button{flex:none;height:20px;text-align:left}
.status span{flex:none}
.status .on{background:#cfd8ee;border-radius:3px;font-weight:700;color:#262a33;text-align:center}
.pane{width:14px;height:14px;flex:none}
.s-cplane{width:100px;padding-left:20px}
.s-num{width:86px}
.s-y{width:96px}
.s-z{width:82px}
.s-unit{width:72px}
.s-layer{display:flex;align-items:center;gap:6px;width:189px}
.swatch{width:16px;height:15px;background:#000}
.w-grid{width:70px}
.w-ortho{width:64px}
.status .w-ortho{padding-left:12px}
.w-planar{width:44px}
.w-osnap{width:51px;margin-right:3px}
.w-smart{width:80px}
.w-gumball{width:129px}
.status .w-gumball{padding-left:13px}
.w-auto{display:flex;align-items:center;width:151px}
.lock{width:10px;height:14px;margin:0 10px 0 -5px}
.w-record{width:91px}
.status .w-filter{width:13px;overflow:hidden;margin-right:3px;padding-left:8px;text-align:left}

.gh{position:absolute;left:642px;right:18px;top:6px;height:540px;display:flex;flex-direction:column;background:#f0f0f0;border:1px solid #555}
.gh-title{display:flex;align-items:center;justify-content:space-between;height:30px;background:#fff;padding:0 9px 0 8px}
.gh-title h1{font-size:12px}
.win-btns{display:flex;gap:33px;padding-right:8px}
.win-btns svg{width:12px;height:12px;fill:none;stroke:#000}
.gh-menu{display:flex;align-items:center;height:29px;background:linear-gradient(90deg,#f0f0f0,#fcfcfc);padding:0 10px 0 14px;gap:20px}
.doc{margin-left:auto}
.gh-tabs{display:flex;height:23px;border-bottom:1px solid #999}
.gh-tabs button{flex:0 1 28px;height:23px;padding-top:2px;display:flex;align-items:center;justify-content:center;color:#333}
.gh-tabs svg{width:16px;height:16px}
.gh-tabs .on{background:#fff;border:1px solid #999;border-bottom:0;border-radius:6px 6px 0 0;padding:0 0 3px}
.gh-tabs .letter{font:900 15px "Liberation Sans",sans-serif;-webkit-text-stroke:1px #333}
.gh-tabs .ui-tab{flex-basis:16px;height:16px;margin:4px 6px 0;padding:0;background:#5f2c91;color:#fff;font-size:13px}
.ribbon{display:flex;gap:3px;height:89px;padding:2px 3px 13px;background:linear-gradient(#d2d2d2,#f0f0f0);border-bottom:1px solid #666}
.panel{display:flex;flex-direction:column;border:1px solid #777;border-radius:5px;overflow:hidden;background:linear-gradient(#ddd,#cfcfcf 55%,#eaeaea)}
.groups{flex:1;display:flex;padding:1px 2px 2px}
.group{display:grid;grid-template-columns:28px;grid-template-rows:28px 28px;padding:0 5px 0 4px;border-left:1px solid #c3c3c3}
.group.two{grid-template-columns:28px 28px}
.group.first{border-left:0;padding-left:0;padding-right:4px}
.group.last{padding-right:0}
.group button{display:grid;place-items:center;align-content:center}
.group svg{width:24px;height:24px}
.attr span,.thm span{font:700 8px/9px "Liberation Serif",serif;color:#222}
.group .attr svg{height:15px}
.group .thm svg{height:14px}
.thm span{font-size:9px}
.panel footer{position:relative;height:14px;padding-right:12px;background:linear-gradient(#2b2b2b,#111);color:#fff;text-align:center;font-size:10px;line-height:11px}
.panel footer i{position:absolute;right:3px;top:0;color:#bbb;font-style:normal;font-size:8px}
.pk{fill:none;stroke:#f26cae;stroke-width:2.5}
.pk2{fill:none;stroke:#f26cae;stroke-width:2.4}
.ds{fill:none;stroke:#333;stroke-width:1.3;stroke-dasharray:3 1}
.bl{fill:none;stroke:#18a9ec;stroke-width:2.6}
.ar{fill:#ff5fae;stroke:#333;stroke-width:.8}

.gh-bar,.modes{display:flex;align-items:center}
.gh-bar{height:32px;padding:0 3px;background:linear-gradient(#fdfdfd,#f2f2f2);border-bottom:1px solid #ccc}
.gh-bar button{width:24px;height:28px;display:grid;place-items:center;margin-right:6px}
.gh-bar button svg{width:24px;height:24px}
.gh-bar .modes button{margin-right:4px}
.gh-bar .modes .picked{width:28px;border:1px solid #0078d7;margin-right:0}
.gh-bar .modes .end{margin-right:2px}
.sep{width:1px;height:20px;background:#bbb;margin:0 8px 0 9px}
.sep.lead{margin:0 4px 0 2px}
.sep.tight{margin:0 4px 0 1px}
.combo{display:grid;align-items:center;width:158px;margin-right:5px}
.combo select{grid-area:1/1;height:23px;border:1px solid #777;background:#fff;font:inherit;padding:0 3px;appearance:none}
.combo svg{grid-area:1/1;justify-self:end;margin-right:4px;width:10px;height:6px;fill:none;stroke:#444;pointer-events:none}
.drop{border:solid transparent;border-width:3px 3px 0;border-top-color:#000;margin:0 7px 0 -1px}
.fill{flex:1}

.canvas{position:relative;flex:1;min-height:0;overflow:hidden;background:#d4cfc8;border-bottom:1px solid #aaa}
.wires{position:absolute;left:0;top:0}
.node{position:absolute;border:2px solid #222;border-radius:5px}
.geo{left:69px;top:27px;width:83px;height:40px;background:linear-gradient(#fff,#e6e6e6 20%,#c6c6c6);display:grid;place-items:center}
.geo svg{width:40px;height:36px}
.note{height:34px;background:#fff95c;font:17px/26px "Liberation Mono",monospace;color:#1d5e12;padding-left:11px;box-shadow:inset 0 1px #ffd}
.n-name{left:48px;top:84px;width:125px}
.n-temp{left:80px;top:141px;width:61px}
.n-film{left:69px;top:198px;width:83px;padding-left:17px}
.comp{position:absolute;left:299px;top:27px;width:278px}
.comp-body{display:flex;align-items:center;height:235px;border:2px solid #333;border-radius:6px;background:linear-gradient(#fafafa,#e6e6e6 15%,#c6c6c6);font:16px/20px "Noto Sans",sans-serif}
.comp-body svg{width:32px;height:40px;margin:0 9px 0 14px}
.ins,.outs{height:228px;display:grid;grid-auto-rows:1fr;align-items:center}
.ins{width:115px;text-align:right}
.comp-foot{height:25px;margin:0 9px;background:#323232;color:#fff;border-radius:0 0 5px 5px;text-align:center;font:16px/24px "Noto Sans",sans-serif}
.widgets{position:absolute;left:1px;bottom:0;display:flex;align-items:center;gap:4px;width:92px;height:28px;padding:0 2px;border:1px solid #000;background:linear-gradient(90deg,#eee,#aaa 90%,#888 94%)}
.widgets button{width:24px;height:24px;display:grid;place-items:center}
.widgets svg{width:22px;height:22px}
.widgets .hot{border:1px solid #222;border-radius:3px;background:#fcc21c}
.gh-status{display:flex;align-items:center;gap:3px;height:24px;padding:0 2px 1px 4px;border-top:3px solid #fff}
.gh-status svg{width:16px;height:16px}
.ver{margin-left:auto;margin-right:19px;color:#666}
.gh-status .size{width:12px;height:12px;align-self:flex-end}
```
